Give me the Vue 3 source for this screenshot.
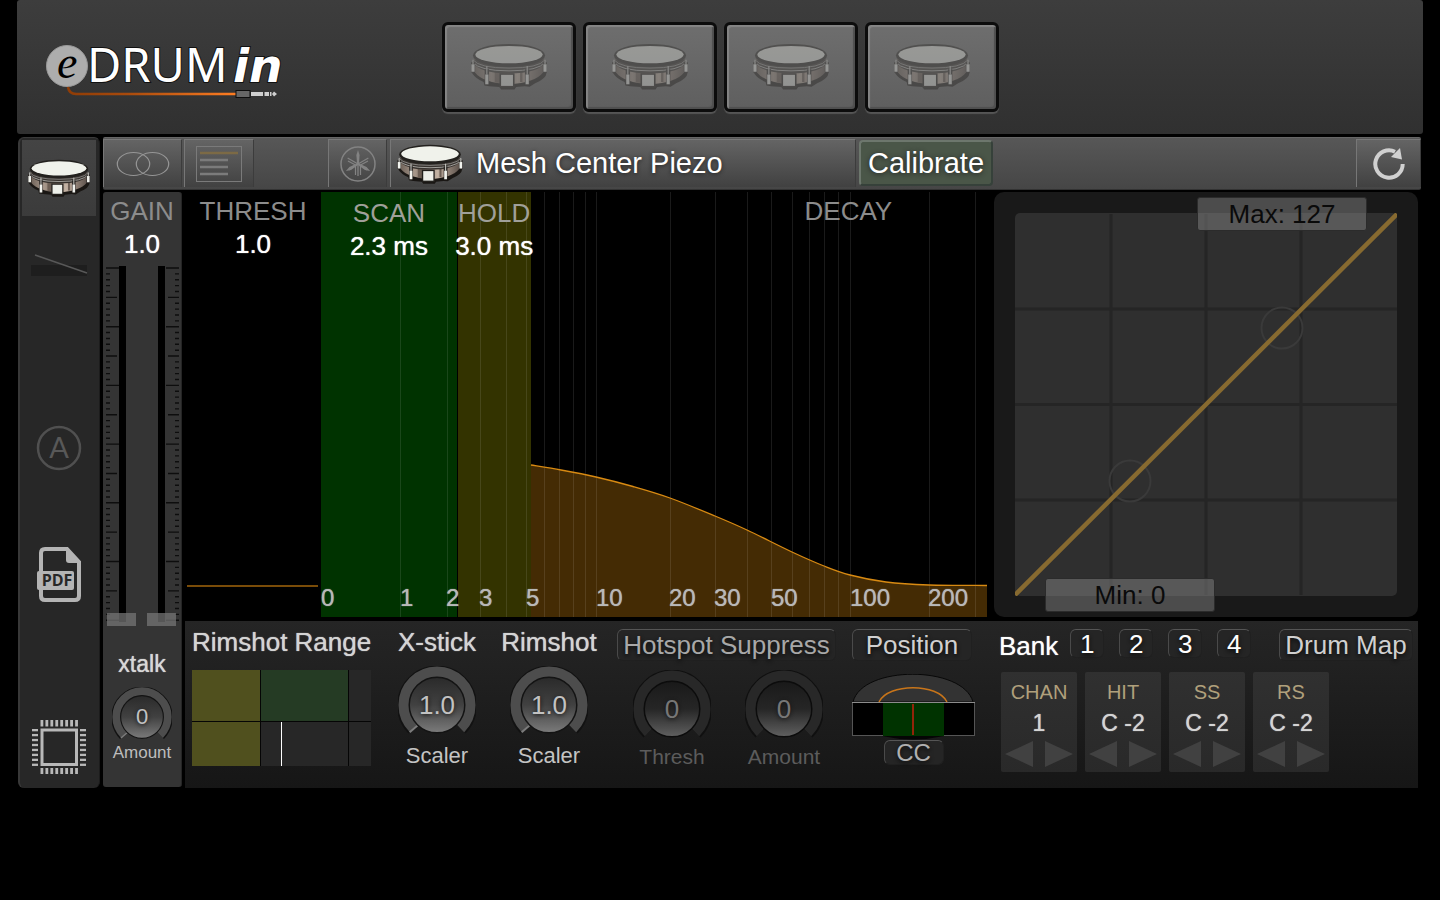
<script setup>
import { ref } from 'vue'

const pads = ['Pad 1', 'Pad 2', 'Pad 3', 'Pad 4']

// Decay chart, in a 666 x 425 drawing space
const gridLines = [79, 126, 159, 185, 205, 223, 238, 252, 264, 275, 349, 394, 426, 450, 471, 488, 503, 517, 529, 608, 654]
const axis = [
  { text: '0', x: 0 },
  { text: '1', x: 79 },
  { text: '2', x: 125 },
  { text: '3', x: 158 },
  { text: '5', x: 205 },
  { text: '10', x: 275 },
  { text: '20', x: 348 },
  { text: '30', x: 393 },
  { text: '50', x: 450 },
  { text: '100', x: 529 },
  { text: '200', x: 607 },
]

// Smooth line through the decay points (Catmull-Rom to Bezier)
const points = [[210, 273], [240, 278], [275, 285], [312, 294.5], [349, 306], [394, 324], [426, 338], [471, 360], [503, 374], [529, 383], [565, 390], [608, 393], [666, 393.5]]
function smooth(pts) {
  let d = `M${pts[0][0]} ${pts[0][1]}`
  for (let i = 0; i < pts.length - 1; i++) {
    const a = pts[i - 1] || pts[i]
    const b = pts[i]
    const c = pts[i + 1]
    const e = pts[i + 2] || c
    d += ` C${b[0] + (c[0] - a[0]) / 6} ${b[1] + (c[1] - a[1]) / 6} ${c[0] - (e[0] - b[0]) / 6} ${c[1] - (e[1] - b[1]) / 6} ${c[0]} ${c[1]}`
  }
  return d
}
const curve = smooth(points)

// Fader scale: long tick each 10, middle tick each 5
const ticks = Array.from({ length: 61 }, (_, i) => ({
  y: 4 + i * 5.87,
  len: i % 10 === 0 ? 13 : i % 5 === 0 ? 11 : 4,
}))

const gainA = ref(0)
const gainB = ref(0)
const scalers = ref([
  { id: 'xstick', title: 'X-stick', name: 'Scaler', value: '1.0' },
  { id: 'rimshot', title: 'Rimshot', name: 'Scaler', value: '1.0' },
])
const hotspot = ref([
  { id: 'hs-thresh', name: 'Thresh', value: '0' },
  { id: 'hs-amount', name: 'Amount', value: '0' },
])
const banks = [1, 2, 3, 4]
const notes = [
  { name: 'CHAN', value: '1' },
  { name: 'HIT', value: 'C -2' },
  { name: 'SS', value: 'C -2' },
  { name: 'RS', value: 'C -2' },
]
const teeth = [0, 1, 2, 3, 4, 5, 6, 7]
</script>

<template>
  <div class="app">
    <svg class="defs" width="0" height="0" aria-hidden="true">
      <defs>
        <linearGradient id="shell" x1="0" x2="1" y1="0" y2="0">
          <stop offset="0" stop-color="#6d6158" />
          <stop offset="0.25" stop-color="#a8988b" />
          <stop offset="0.4" stop-color="#7e6f64" />
          <stop offset="0.62" stop-color="#c4b3a4" />
          <stop offset="0.8" stop-color="#8f8075" />
          <stop offset="1" stop-color="#5a504a" />
        </linearGradient>
        <linearGradient id="disc" x1="0" x2="0" y1="0" y2="1">
          <stop offset="0" stop-color="#2a2a2a" />
          <stop offset="0.5" stop-color="#414141" />
          <stop offset="1" stop-color="#7b7b7b" />
        </linearGradient>
        <linearGradient id="disc-off" x1="0" x2="0" y1="0" y2="1">
          <stop offset="0" stop-color="#191919" />
          <stop offset="0.5" stop-color="#262626" />
          <stop offset="1" stop-color="#606060" />
        </linearGradient>
        <linearGradient id="cable" gradientUnits="userSpaceOnUse" x1="22" x2="190" y1="0" y2="0">
          <stop offset="0" stop-color="#8f3c06" />
          <stop offset="0.35" stop-color="#a84a0c" />
          <stop offset="1" stop-color="#ff7d22" />
        </linearGradient>
      </defs>
      <symbol id="drum" viewBox="0 0 192 118">
        <path d="M3 58 V76 Q12 90 32 98 L34 107 L46 109 L72 111 L76 117 L110 117 L114 111 L136 109 L148 110 L162 101 Q190 90 191 74 V58 Z" fill="#1a1714" />
        <path d="M7 40 L10 74 Q30 100 96 104 Q162 100 182 74 L185 40 Z" fill="url(#shell)" />
        <path d="M60 60 h16 v40 h-16z M124 60 h6 v38 h-6z" fill="#6c5e54" />
        <path d="M5 42 V48 Q20 76 96 76 Q172 76 187 48 V42 Z" fill="#37322e" />
        <path d="M5 48 Q20 70 96 70 Q172 70 187 48" fill="none" stroke="#d4d4d0" stroke-width="2" />
        <path d="M5 42 Q20 63 96 63 Q172 63 187 42" fill="none" stroke="#a8a8a4" stroke-width="2" />
        <ellipse cx="96" cy="31" rx="91" ry="29" fill="#23211e" />
        <ellipse cx="96" cy="29" rx="85" ry="22" fill="#f0f2eb" />
        <path d="M5 48 v26 M40 66 v39 M142 66 v39 M187 48 v26" stroke="#2a2724" stroke-width="11" fill="none" />
        <path d="M5 53 v19 M40 79 v25 M142 79 v25 M187 53 v19" stroke="#f2f3ee" stroke-width="8" fill="none" />
        <path d="M5 42 v12 M40 58 v22 M142 58 v22 M187 42 v12" stroke="#c9c9c4" stroke-width="3" fill="none" />
        <rect x="74" y="78" width="34" height="32" fill="#eef0ea" stroke="#23201d" stroke-width="4" />
      </symbol>
      <symbol id="knob" viewBox="0 0 80 80">
        <path d="M15 65 A35 35 0 1 1 65 65" fill="none" stroke="#121212" stroke-width="12" />
        <path d="M16 64 A34 34 0 1 1 64 64" fill="none" stroke="#4d4d4d" stroke-width="11" />
        <path d="M12 68 L20 61" stroke="#7c7c7c" stroke-width="2" />
        <circle cx="40" cy="40" r="28.5" fill="url(#disc)" stroke="#141414" stroke-width="1.5" />
      </symbol>
      <symbol id="knob-off" viewBox="0 0 80 80">
        <path d="M15 65 A35 35 0 1 1 65 65" fill="none" stroke="#101010" stroke-width="12" />
        <path d="M16 64 A34 34 0 1 1 64 64" fill="none" stroke="#282828" stroke-width="11" />
        <circle cx="40" cy="40" r="28.5" fill="url(#disc-off)" stroke="#0c0c0c" stroke-width="1.5" />
      </symbol>
    </svg>

    <header class="header">
      <svg class="logo" viewBox="0 -20 260 80" role="img" aria-label="eDRUMin">
        <circle cx="21" cy="24" r="20.5" fill="#adadad" stroke="#999" />
        <text x="11" y="36" class="logo-e">e</text>
        <text x="41" y="40" class="logo-drum">DRUM</text>
        <text x="187" y="40" class="logo-in">in</text>
        <path d="M22 45 Q23 52 30 52 H190" fill="none" stroke="url(#cable)" stroke-width="2.5" />
        <rect x="190" y="48.5" width="14" height="7" fill="#666" stroke="#0d0d0d" />
        <path d="M205 50 h12 v4 h-12z M218.500 50 h4.500 v4 h-4.500z M224 50 h1.500 v4 h-1.500z M226 52 l2 -2.500 l3 2.500 l-3 2.500z" fill="#cfcfcf" />
      </svg>
      <div class="pads">
        <button v-for="p in pads" :key="p" class="pad" type="button" :aria-label="p">
          <svg class="pad-drum"><use href="#drum" /></svg>
        </button>
      </div>
    </header>

    <main class="main">
      <nav class="side" aria-label="Pages">
        <button class="side-btn active" type="button" aria-label="Drum">
          <svg width="62" height="38"><use href="#drum" /></svg>
        </button>
        <button class="side-btn slope" type="button" aria-label="Pedal">
          <svg width="58" height="24" viewBox="0 0 58 24">
            <rect x="1" y="12" width="56" height="11" fill="#1e1e1e" />
            <path d="M5 2 L57 20" stroke="#585858" stroke-width="1.5" />
          </svg>
        </button>
        <button class="side-btn auto" type="button" aria-label="Auto">
          <svg width="46" height="46" viewBox="0 0 46 46">
            <circle cx="23" cy="23" r="21" fill="none" stroke="#505050" stroke-width="2.5" />
            <text x="23" y="33" text-anchor="middle" class="a-glyph">A</text>
          </svg>
        </button>
        <button class="side-btn pdf" type="button" aria-label="PDF">
          <svg width="46" height="56" viewBox="0 0 46 56">
            <path d="M5 24 V6 Q5 2 9 2 H31 L43 15 V49 Q43 53 39 53 H9 Q5 53 5 49 V42" fill="none" stroke="#b4b4b4" stroke-width="4" />
            <path d="M30 2 L44 16 H33 Q30 16 30 13 Z" fill="#b4b4b4" />
            <rect x="1" y="24" width="37" height="19" rx="2" fill="#b4b4b4" />
            <text x="21" y="39" text-anchor="middle" class="pdf-text">PDF</text>
          </svg>
        </button>
        <button class="side-btn chip" type="button" aria-label="Device">
          <svg width="54" height="54" viewBox="0 0 54 54" fill="#b8b8b8">
            <rect x="10" y="10" width="34.5" height="34.5" fill="none" stroke="#b8b8b8" stroke-width="3" />
            <g v-for="t in teeth" :key="t">
              <rect :x="8.5 + t * 4.95" y="0" width="2.8" height="6.5" />
              <rect :x="8.5 + t * 4.95" y="48" width="2.8" height="6" />
              <rect x="0" :y="9 + t * 4.95" width="6" height="2.3" />
              <rect x="48" :y="9 + t * 4.95" width="6" height="2.3" />
            </g>
          </svg>
        </button>
      </nav>

      <div class="content">
        <div class="toolbar">
          <button class="tool link" type="button" aria-label="Link">
            <svg width="54" height="26" viewBox="0 0 54 26" fill="none" stroke="#969696" stroke-width="1.2">
              <ellipse cx="17.5" cy="13" rx="16.2" ry="11.5" />
              <ellipse cx="36.5" cy="13" rx="16.2" ry="11.5" />
            </svg>
          </button>
          <button class="tool list" type="button" aria-label="List">
            <svg width="46" height="36" viewBox="0 0 46 36" fill="none" stroke="#7b7b7b">
              <rect x="0.5" y="0.5" width="45" height="35" stroke="#7a7a7a" />
              <path d="M4 7 H42" stroke="#7c6a45" stroke-width="2.5" />
              <path d="M4 14 H32 M4 21 H32 M4 28 H32" stroke-width="2.5" />
            </svg>
          </button>
          <button class="tool brand" type="button" aria-label="Brand">
            <svg width="38" height="38" viewBox="-19 -19 38 38" fill="none" stroke="#838383">
              <circle r="17" stroke-width="1.5" />
              <g v-for="a in [0, 120, 240]" :key="a" :transform="`rotate(${a})`">
                <path d="M0 -14 L1.6 -9 L1 0 H-1 L-1.6 -9 Z" fill="#838383" stroke="none" />
                <path d="M0 0 V12" stroke-width="1.3" />
              </g>
              <path d="M-2.500 1 V11 M2.500 1 V11 M-2.500 1 L-10 -3 M2.500 1 L10 -3 M-2.500 1 L-9 6 M2.500 1 L9 6" stroke-width="1.2" />
            </svg>
          </button>
          <button class="tool preset" type="button">
            <svg width="66" height="40"><use href="#drum" /></svg>
            <span>Mesh Center Piezo</span>
          </button>
          <button class="calibrate" type="button">Calibrate</button>
          <button class="tool refresh" type="button" aria-label="Refresh">
            <svg width="34" height="36" viewBox="0 0 34 36">
              <path d="M30.7 18 A13.7 13.7 0 1 1 23 5.700" fill="none" stroke="#d0d0d0" stroke-width="4" />
              <path d="M28 2 L30 13.500 L19 11 Z" fill="#d0d0d0" />
            </svg>
          </button>
        </div>

        <div class="body">
          <section class="gain">
            <h2 class="head">GAIN</h2>
            <output class="value">1.0</output>
            <div class="faders">
              <svg class="scale" viewBox="0 0 79 364">
                <path d="M16 2 h7 v356 h-7z M55 2 h7 v356 h-7z" fill="#000" />
                <g stroke="#0d0d0d" stroke-width="1.4">
                  <g v-for="(t, i) in ticks" :key="i">
                    <path :d="`M3 ${t.y} h${t.len} M76 ${t.y} h${-t.len}`" />
                  </g>
                </g>
                <path d="M4 349 h29 v13 h-29z M44 349 h29 v13 h-29z" fill="#777" fill-opacity="0.72" />
              </svg>
              <input v-model="gainA" class="fader" type="range" min="0" max="60" aria-label="Gain left" />
              <input v-model="gainB" class="fader right" type="range" min="0" max="60" aria-label="Gain right" />
            </div>
            <label class="xtalk-name" for="xtalk">xtalk</label>
            <div class="knob small">
              <svg class="dial"><use href="#knob" /></svg>
              <output class="knob-value">0</output>
              <input id="xtalk" class="knob-input" type="range" value="0" />
            </div>
            <label class="xtalk-sub" for="xtalk">Amount</label>
          </section>

          <div class="work">
            <div class="graphs">
              <section class="thresh">
                <h2 class="head">THRESH</h2>
                <output class="value">1.0</output>
                <div class="thresh-line"></div>
              </section>

              <section class="decay">
                <svg class="chart" viewBox="0 0 666 425" preserveAspectRatio="none">
                  <rect x="0" y="0" width="136" height="425" fill="#003300" />
                  <rect x="137" y="0" width="73" height="425" fill="#333300" />
                  <path :d="curve + ' V425 H210 Z'" fill="#442b04" />
                  <path v-for="x in gridLines" :key="x" :d="`M${x + 0.5} 0 V425`" stroke="#fff" stroke-opacity="0.1" />
                  <path :d="curve" fill="none" stroke="#d88a12" stroke-width="1.3" />
                </svg>
                <div class="stage scan">
                  <h2 class="head">SCAN</h2>
                  <output class="value">2.3 ms</output>
                </div>
                <div class="stage hold">
                  <h2 class="head">HOLD</h2>
                  <output class="value">3.0 ms</output>
                </div>
                <div class="stage tail">
                  <h2 class="head">DECAY</h2>
                </div>
                <span v-for="a in axis" :key="a.text" class="axis" :style="{ left: (a.x / 666) * 100 + '%' }">{{ a.text }}</span>
              </section>

              <section class="velocity">
                <svg class="plot" viewBox="0 0 382 383">
                  <rect width="382" height="383" rx="5" fill="#2f2f2f" />
                  <path d="M96 1 V382 M191 1 V382 M286 1 V382 M0 96 H382 M0 191.500 H382 M0 287 H382" stroke="#252525" stroke-width="3" />
                  <circle cx="267" cy="115" r="20.500" fill="none" stroke="#3a3a3a" stroke-width="2" />
                  <circle cx="115" cy="268" r="20.500" fill="none" stroke="#3a3a3a" stroke-width="2" />
                  <path d="M0 382 L382 1" stroke="#876a30" stroke-width="4.500" />
                </svg>
                <button class="limit max" type="button">Max: 127</button>
                <button class="limit min" type="button">Min: 0</button>
              </section>
            </div>

            <div class="panel">
              <section class="range">
                <h3 class="label">Rimshot Range</h3>
                <svg class="range-map" viewBox="0 0 179 96">
                  <rect width="179" height="96" fill="#272727" />
                  <rect width="68" height="96" fill="#50501e" />
                  <rect x="69" width="87" height="51" fill="#253b24" />
                  <path d="M68.500 0 V96 M156.500 0 V96 M0 51.500 H179" stroke="#050505" />
                  <path d="M89.500 52 V96" stroke="#fff" />
                </svg>
              </section>

              <section v-for="k in scalers" :key="k.id" class="scaler">
                <h3 class="label">{{ k.title }}</h3>
                <div class="knob">
                  <svg class="dial"><use href="#knob" /></svg>
                  <output class="knob-value">{{ k.value }}</output>
                  <input :id="k.id" class="knob-input" type="range" value="0" />
                </div>
                <label class="knob-name" :for="k.id">{{ k.name }}</label>
              </section>

              <section class="hotspot">
                <button class="soft wide" type="button">Hotspot Suppress</button>
                <div class="pair">
                  <div v-for="k in hotspot" :key="k.id" class="off">
                    <div class="knob">
                      <svg class="dial"><use href="#knob-off" /></svg>
                      <output class="knob-value">{{ k.value }}</output>
                      <input :id="k.id" class="knob-input" type="range" value="0" />
                    </div>
                    <label class="knob-name" :for="k.id">{{ k.name }}</label>
                  </div>
                </div>
              </section>

              <section class="position">
                <button class="soft pos" type="button">Position</button>
                <svg class="pos-map" viewBox="0 0 123 66">
                  <path d="M30 62 Q61 69 92 62 Z" fill="#050505" />
                  <path d="M1 28 C10 -9 111 -9 121 28 Z" fill="#333" stroke="#080808" />
                  <path d="M27 28 C36 9 86 9 95 28" fill="none" stroke="#c8751a" stroke-width="1.500" />
                  <rect x="0.500" y="28.500" width="122" height="33" fill="#000" stroke="#555" />
                  <rect x="31" y="29" width="61" height="33" fill="#003300" />
                  <path d="M0 28.500 H123" stroke="#8c8c8c" />
                  <path d="M61 30 V61" stroke="#c4200c" stroke-width="1.500" />
                </svg>
                <button class="soft cc" type="button">CC</button>
              </section>

              <section class="bank">
                <div class="bank-row">
                  <h3 class="label white">Bank</h3>
                  <div class="bank-list">
                    <button v-for="b in banks" :key="b" class="soft num" type="button">{{ b }}</button>
                  </div>
                  <button class="soft map" type="button">Drum Map</button>
                </div>
                <div class="notes">
                  <div v-for="n in notes" :key="n.name" class="note">
                    <span class="note-name">{{ n.name }}</span>
                    <span class="note-value">{{ n.value }}</span>
                    <div class="arrows">
                      <button type="button" class="arrow" :aria-label="n.name + ' down'">
                        <svg width="28" height="26" viewBox="0 0 28 26"><path d="M28 0 V26 L0 13 Z" fill="#414141" /></svg>
                      </button>
                      <button type="button" class="arrow" :aria-label="n.name + ' up'">
                        <svg width="28" height="26" viewBox="0 0 28 26"><path d="M0 0 V26 L28 13 Z" fill="#414141" /></svg>
                      </button>
                    </div>
                  </div>
                </div>
              </section>
            </div>
          </div>
        </div>
      </div>
    </main>
  </div>
</template>

<style>
body {
  background: #000;
}
</style>

<style scoped>
.app {
  min-height: 100vh;
  box-sizing: border-box;
  padding: 0 17px;
  background: #000;
  font-family: "Liberation Sans", Arial, sans-serif;
  color: #d6d6d6;
}
.app * {
  box-sizing: border-box;
}
.defs {
  position: absolute;
}
svg {
  display: block;
  flex: none;
}
button {
  margin: 0;
  padding: 0;
  border: 0;
  background: none;
  color: inherit;
  font-family: inherit;
  cursor: pointer;
}
h2,
h3 {
  margin: 0;
  font-weight: 400;
}

/* Header */
.header {
  display: flex;
  align-items: flex-start;
  padding: 22px 0 22px 29px;
  background: linear-gradient(#3d3d3d, #303030);
  border-radius: 3px;
}
.logo {
  width: 260px;
  height: 80px;
  overflow: visible;
}
.logo text {
  fill: #fff;
  stroke: #111;
  stroke-width: 2px;
  paint-order: stroke;
}
.logo .logo-e {
  font: italic 46px "Liberation Serif", serif;
  fill: #000;
  stroke: none;
}
.logo-drum {
  font: 47px "Noto Sans", sans-serif;
}
.logo-in {
  font: italic 700 47px "DejaVu Sans", sans-serif;
}
.pads {
  display: flex;
  gap: 7px;
  margin-left: 136px;
}
.pad {
  display: flex;
  justify-content: center;
  width: 134px;
  height: 90px;
  padding-top: 18px;
  border: 3px solid #0c0c0c;
  border-radius: 6px;
  background: linear-gradient(#6e6e6e, #5f5f5f);
  box-shadow: inset 2px 2px 1px #858585, inset -2px -2px 1px #4f4f4f, 0 2px 1px #555;
}
.pad-drum {
  width: 76px;
  height: 47px;
  opacity: 0.34;
}

/* Frame */
.main {
  display: grid;
  grid-template-columns: 82px minmax(0, 1fr);
  gap: 3px;
  padding: 3px 2px 0 1px;
}
.side {
  display: flex;
  flex-direction: column;
  padding: 2px 3px 11px 2px;
  border-radius: 6px;
  background: #272727;
  border-left: 2px solid #383838;
  border-top: 1px solid #3a3a3a;
  border-right: 1px solid #1c1c1c;
}
.side-btn {
  display: flex;
  align-items: center;
  justify-content: center;
  height: 60px;
}
.side-btn.active {
  height: 76px;
  background: linear-gradient(#444, #3b3b3b);
}
.side-btn.slope {
  height: 98px;
}
.side-btn.auto {
  margin-top: 104px;
}
.side-btn.pdf {
  margin-top: 67px;
}
.side-btn.chip {
  margin-top: 112px;
}
.a-glyph {
  font: 29px Lato, sans-serif;
  fill: #585858;
}
.pdf-text {
  font: 700 16px "Open Sans", sans-serif;
  fill: #272727;
}

/* Toolbar */
.toolbar {
  display: flex;
  height: 53px;
  padding: 1px 0 2px;
  border-top: 1px solid #666;
  border-bottom: 1px solid #333;
  border-radius: 2px;
  background: linear-gradient(#575757, #464646);
}
.tool {
  display: flex;
  align-items: center;
  justify-content: center;
  border-left: 1px solid #777;
  border-top: 1px solid #777;
  border-right: 1px solid #3c3c3c;
  background: linear-gradient(#646464, #414141);
}
.link {
  width: 79px;
}
.list {
  width: 70px;
  margin-left: 2px;
}
.brand {
  width: 59px;
  margin-left: 74px;
}
.preset {
  flex: 0 1 466px;
  justify-content: flex-start;
  gap: 13px;
  margin-left: 3px;
  padding-left: 6px;
  color: #fff;
  font-size: 29px;
  text-shadow: 0 1px 4px #222;
}
.calibrate {
  width: 134px;
  height: 46px;
  margin-left: 3px;
  margin-top: 1px;
  border: 2px solid;
  border-color: #6d776d #36413a #36413a #6d776d;
  border-radius: 4px;
  background: #4a5648;
  color: #fff;
  font-size: 29px;
  text-shadow: 0 1px 5px #222;
}
.refresh {
  width: 65px;
  margin-left: auto;
}

/* Body */
.body {
  display: grid;
  grid-template-columns: 79px minmax(0, 1fr);
  gap: 3px;
  padding: 2px 3px 0 0;
}
.head {
  font-size: 26px;
  line-height: 33px;
  color: #8c8c8c;
  text-align: center;
}
.value {
  display: block;
  font-size: 26px;
  line-height: 33px;
  color: #fff;
  text-align: center;
  text-shadow: 0 0 1px #fff;
  white-space: nowrap;
}
.gain {
  display: flex;
  flex-direction: column;
  align-items: center;
  margin-bottom: 1px;
  padding-top: 3px;
  border-right: 1px solid #252525;
  border-radius: 3px;
  background: #343434;
}
.faders {
  position: relative;
  width: 79px;
  height: 364px;
  margin-top: 3px;
}
.scale {
  width: 79px;
  height: 364px;
}
.fader {
  position: absolute;
  top: 0;
  left: 4px;
  width: 30px;
  height: 364px;
  margin: 0;
  opacity: 0;
  writing-mode: vertical-lr;
  direction: rtl;
}
.fader.right {
  left: 44px;
}
.xtalk-name {
  margin-top: 23px;
  font-size: 23px;
  line-height: 26px;
  color: #d8d8d8;
  text-shadow: 0 0 1px #d8d8d8;
}
.xtalk-sub {
  font-size: 17px;
  line-height: 20px;
  color: #bdbdbd;
}

/* Knobs */
.knob {
  position: relative;
  display: grid;
  place-items: center;
  width: 78px;
  height: 78px;
}
.knob.small {
  width: 60px;
  height: 60px;
  margin: 10px 0 -4px;
}
.dial,
.knob-value,
.knob-input {
  grid-area: 1 / 1;
}
.dial {
  width: 100%;
  height: 100%;
}
.knob-value {
  font-size: 26px;
  line-height: 30px;
  color: #c2c2c2;
  text-shadow: 0 1px 4px #111;
}
.small .knob-value {
  font-size: 22px;
}
.knob-input {
  width: 100%;
  height: 100%;
  margin: 0;
  opacity: 0;
}
.knob-name {
  font-size: 22px;
  line-height: 24px;
  color: #c4c4c4;
}

/* Graphs */
.graphs {
  display: grid;
  grid-template-columns: 134px minmax(0, 1fr) 424px;
  min-height: 425px;
}
.thresh {
  display: flex;
  flex-direction: column;
  padding: 3px 0 30px 2px;
}
.thresh-line {
  margin-top: auto;
  margin-right: 1px;
  border-bottom: 2px solid #7a4c08;
}
.decay {
  position: relative;
  margin: 0 7px 0 2px;
}
.chart {
  width: 100%;
  height: 100%;
}
.stage {
  position: absolute;
  top: 5px;
  display: flex;
  flex-direction: column;
  align-items: center;
}
.stage .head,
.stage .value {
  line-height: 33px;
}
.stage .head {
  color: #a0a09a;
}
.scan {
  left: 0;
  width: 20.4%;
}
.hold {
  left: 20.4%;
  width: 11.2%;
}
.tail {
  top: 3px;
  left: 72.6%;
}
.tail .head {
  color: #8c8c8c;
}
.axis {
  position: absolute;
  bottom: 5px;
  font-size: 24px;
  line-height: 28px;
  color: #b8b8b8;
  text-shadow: 0 0 1px #b8b8b8;
}
.velocity {
  position: relative;
  padding: 21px 21px 0;
  border-radius: 10px;
  background: #191919;
}
.plot {
  width: 100%;
}
.limit {
  position: absolute;
  width: 170px;
  height: 34px;
  border: 1px solid #2b2b2b;
  border-radius: 3px;
  background: rgba(140, 140, 140, 0.45);
  color: #0a0a0a;
  font-size: 26px;
  line-height: 32px;
}
.max {
  top: 5px;
  right: 51px;
}
.min {
  bottom: 5px;
  left: 51px;
}

/* Lower panel */
.panel {
  display: flex;
  margin-top: 4px;
  min-height: 167px;
  padding: 6px 5px 0 7px;
  background: linear-gradient(#252525, #161616);
}
.label {
  font-size: 26px;
  line-height: 30px;
  color: #d4d4d4;
  white-space: nowrap;
  text-shadow: 0 0 1px #d4d4d4;
}
.label.white {
  color: #fff;
}
.range {
  width: 179px;
}
.range-map {
  width: 179px;
  height: 96px;
  margin-top: 13px;
}
.scaler {
  display: flex;
  flex-direction: column;
  align-items: center;
  width: 80px;
  margin-left: 26px;
}
.scaler + .scaler {
  width: 96px;
  margin-left: 24px;
}
.scaler .knob {
  margin-top: 9px;
}
.hotspot {
  width: 219px;
  margin-left: 20px;
}
.soft {
  height: 32px;
  border: 1px solid #202020;
  border-top-color: #555;
  border-left-color: #4a4a4a;
  border-radius: 6px;
  background: #252525;
  color: #d0d0d0;
  font-size: 26px;
  line-height: 30px;
  white-space: nowrap;
  text-shadow: 0 2px 4px #0a0a0a;
}
.wide {
  width: 100%;
  margin-top: 2px;
  color: #a8a8a8;
}
.pair {
  display: flex;
  justify-content: space-between;
  padding: 9px 13px 0 16px;
}
.off {
  display: flex;
  flex-direction: column;
  align-items: center;
  width: 78px;
}
.off .knob-value {
  color: #777;
}
.off .knob-name {
  margin-top: -3px;
  font-size: 21px;
  color: #5c5c5c;
}
.position {
  display: flex;
  flex-direction: column;
  align-items: center;
  width: 123px;
  margin-left: 16px;
}
.pos {
  width: 120px;
  margin-top: 2px;
  align-self: flex-start;
}
.pos-map {
  width: 123px;
  height: 66px;
  margin-top: 13px;
}
.cc {
  width: 60px;
  height: 25px;
  font-size: 24px;
  line-height: 22px;
  color: #b0b0b0;
}
.bank {
  flex: 1;
  margin-left: 24px;
}
.bank-row {
  display: flex;
  align-items: flex-start;
}
.bank-row .label {
  margin-top: 4px;
}
.bank-list {
  display: flex;
  gap: 15px;
  margin: 2px 0 0 12px;
}
.num {
  width: 34px;
  height: 29px;
  line-height: 28px;
  color: #fff;
}
.map {
  width: 134px;
  margin: 2px 0 0 auto;
}
.notes {
  display: flex;
  gap: 8px;
  margin: 11px 0 0 2px;
}
.note {
  display: flex;
  flex-direction: column;
  align-items: center;
  width: 76px;
  height: 100px;
  padding: 8px 4px 0;
  border-radius: 2px;
  background: linear-gradient(#303030, #292929);
}
.note-name {
  font-size: 20px;
  line-height: 24px;
  color: #b0a07c;
}
.note-value {
  margin-top: 4px;
  font-size: 23px;
  line-height: 30px;
  color: #d4d4d4;
  text-shadow: 0 0 1px #d4d4d4;
}
.arrows {
  display: flex;
  justify-content: space-between;
  width: 100%;
  margin-top: 3px;
}
</style>
